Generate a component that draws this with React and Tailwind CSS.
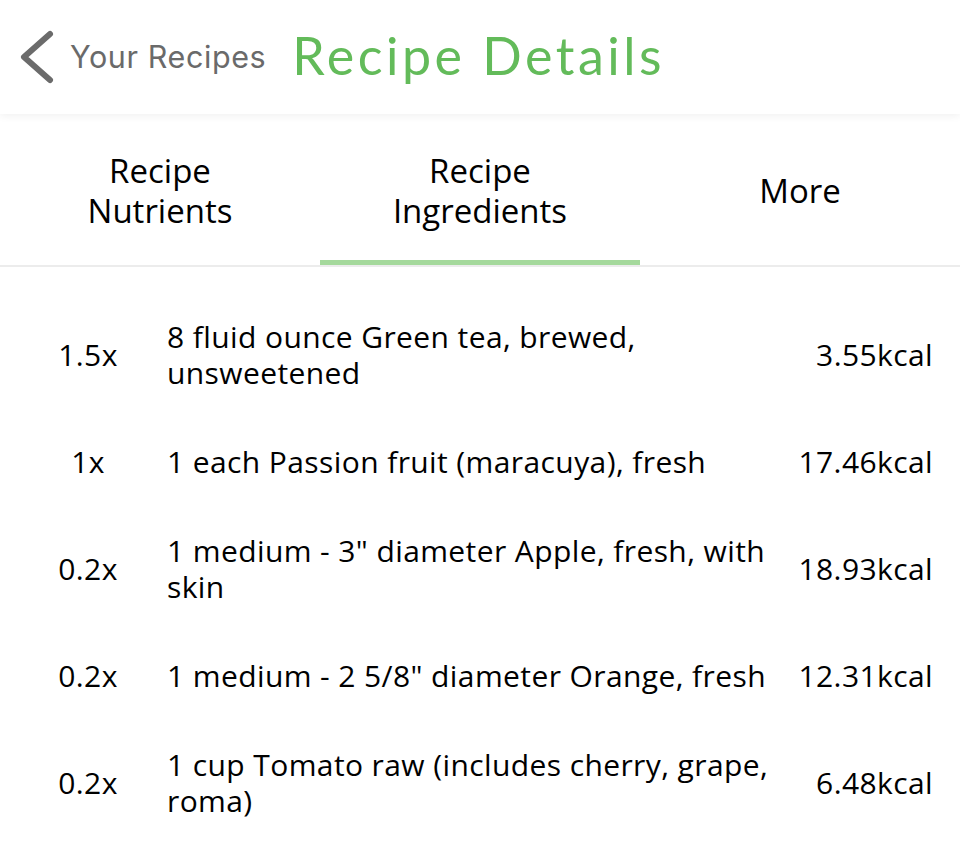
const TABS = [
  { label: ['Recipe', 'Nutrients'] },
  { label: ['Recipe', 'Ingredients'], active: true },
  { label: ['More'] },
]

const INGREDIENTS = [
  { qty: '1.5x', name: '8 fluid ounce Green tea, brewed, unsweetened', kcal: '3.55kcal' },
  { qty: '1x',   name: '1 each Passion fruit (maracuya), fresh',       kcal: '17.46kcal' },
  { qty: '0.2x', name: '1 medium - 3" diameter Apple, fresh, with skin', kcal: '18.93kcal' },
  { qty: '0.2x', name: '1 medium - 2 5/8" diameter Orange, fresh',     kcal: '12.31kcal' },
  { qty: '0.2x', name: '1 cup Tomato raw (includes cherry, grape, roma)', kcal: '6.48kcal' },
]

export default function App() {
  return (
    <div className="w-[960px] h-[852px] bg-white overflow-hidden font-['Open_Sans',sans-serif] text-black">
      {/* header */}
      <div className="relative z-10 h-[114px] flex items-center bg-white shadow-[0_2px_8px_rgba(0,0,0,0.06)]">
        <svg className="ml-[18px] w-[38px] h-[56px] shrink-0" viewBox="0 0 38 56" fill="none">
          <polyline points="32,5 6,28 32,51" stroke="#6b6b6b" strokeWidth="6" strokeLinecap="round" strokeLinejoin="round" />
        </svg>
        <span className="ml-[14px] text-[30.5px] text-[#6a6a6a] tracking-[0.6px] font-['Inter',sans-serif]">Your Recipes</span>
        <span className="ml-[26px] text-[52px] text-[#63bb5a] font-['Lato',sans-serif] tracking-[3.5px] -mt-[4px]">Recipe Details</span>
      </div>

      {/* tabs */}
      <div className="grid grid-cols-3 h-[153px] border-b-[2px] border-[#ececec]">
        {TABS.map(t => (
          <div key={t.label.join(' ')} className="relative flex flex-col items-center justify-center pt-[2px] text-[33px] leading-[40px]">
            {t.label.map(l => <span key={l}>{l}</span>)}
            {t.active && <div className="absolute left-0 right-0 bottom-0 h-[5px] bg-[#a5d99c]" />}
          </div>
        ))}
      </div>

      {/* ingredients */}
      <div className="pt-[34px]">
        {INGREDIENTS.map((it, i) => (
          <div key={i} className="h-[107px] flex items-center text-[30px] leading-[36px] tracking-[0.4px]">
            <div className="w-[176px] text-center shrink-0">{it.qty}</div>
            <div className="w-[622px] shrink-0 -ml-[9px]">{it.name}</div>
            <div className="flex-1 text-right pr-[27px]">{it.kcal}</div>
          </div>
        ))}
      </div>
    </div>
  )
}
